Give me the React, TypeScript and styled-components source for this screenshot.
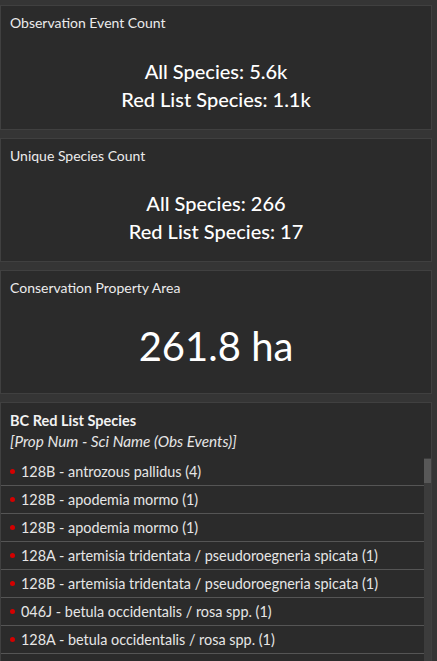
import React from "react";
import styled, { createGlobalStyle } from "styled-components";

const Global = createGlobalStyle`
  html, body { margin: 0; padding: 0; background: #353535; }
  body { font-family: Lato, "Open Sans", sans-serif; overflow: hidden; }
`;

const Page = styled.div`
  display: flex;
  flex-direction: column;
  gap: 8px;
  padding: 5px 5px 0 0;
  height: 661px;
  box-sizing: border-box;
  overflow: hidden;
`;

const Card = styled.section<{ $h?: number }>`
  background: #2b2b2b;
  border: 1px solid #404040;
  box-sizing: border-box;
  display: flex;
  flex-direction: column;
  ${(p) => (p.$h ? `height: ${p.$h}px; flex: none;` : "flex: 1 0 auto; min-height: 300px;")}
`;

const Title = styled.div`
  color: #ececec;
  font-size: 14px;
  padding: 8px 9px 0;
  line-height: 18px;
`;

const Body = styled.div<{ $shift?: number }>`
  flex: 1;
  display: flex;
  flex-direction: column;
  align-items: center;
  justify-content: center;
  padding-top: ${(p) => p.$shift ?? 0}px;
`;

const Line = styled.div`
  color: #fff;
  font-size: 20px;
  line-height: 28px;
  font-weight: 500;
`;

const Big = styled.div`
  color: #fff;
  font-size: 40px;
  line-height: 50px;
`;

const ListHead = styled.div`
  padding: 8px 9px 0;
  height: 55px;
  box-sizing: border-box;
`;

const ListTitle = styled.div`
  color: #f2f2f2;
  font-weight: 700;
  font-size: 14.5px;
  line-height: 20px;
`;

const ListSub = styled.div`
  color: #e6e6e6;
  font-style: italic;
  font-size: 15.3px;
  line-height: 20px;
`;

const ListArea = styled.div`
  display: flex;
  flex: 1;
`;

const Rows = styled.ul`
  list-style: none;
  margin: 0;
  padding: 0;
  flex: 1;
`;

const Row = styled.li`
  height: 28px;
  box-sizing: border-box;
  border-bottom: 1px solid #555;
  display: flex;
  align-items: center;
  gap: 6px;
  padding-left: 9px;
  color: #e6e6e6;
  font-size: 14.4px;
  white-space: nowrap;
`;

const Dot = styled.span`
  width: 5px;
  height: 5px;
  border-radius: 50%;
  background: #d40000;
  flex: none;
`;

const Track = styled.div`
  width: 7px;
  background: #3c3c3c;
  display: flex;
  flex-direction: column;
`;

const Thumb = styled.div`
  height: 24px;
  background: #585858;
  margin-top: 1px;
`;

const items = [
  "128B - antrozous pallidus (4)",
  "128B - apodemia mormo (1)",
  "128B - apodemia mormo (1)",
  "128A - artemisia tridentata / pseudoroegneria spicata (1)",
  "128B - artemisia tridentata / pseudoroegneria spicata (1)",
  "046J - betula occidentalis / rosa spp. (1)",
  "128A - betula occidentalis / rosa spp. (1)",
];

export default function App() {
  return (
    <>
      <Global />
      <Page>
        <Card $h={125}>
          <Title>Observation Event Count</Title>
          <Body $shift={8}>
            <Line>All Species: 5.6k</Line>
            <Line>Red List Species: 1.1k</Line>
          </Body>
        </Card>
        <Card $h={124}>
          <Title>Unique Species Count</Title>
          <Body $shift={8}>
            <Line>All Species: 266</Line>
            <Line>Red List Species: 17</Line>
          </Body>
        </Card>
        <Card $h={124}>
          <Title>Conservation Property Area</Title>
          <Body $shift={2}>
            <Big>261.8 ha</Big>
          </Body>
        </Card>
        <Card>
          <ListHead>
            <ListTitle>BC Red List Species</ListTitle>
            <ListSub>[Prop Num - Sci Name (Obs Events)]</ListSub>
          </ListHead>
          <ListArea>
            <Rows>
              {items.map((t, i) => (
                <Row key={i}>
                  <Dot />
                  {t}
                </Row>
              ))}
            </Rows>
            <Track>
              <Thumb />
            </Track>
          </ListArea>
        </Card>
      </Page>
    </>
  );
}
